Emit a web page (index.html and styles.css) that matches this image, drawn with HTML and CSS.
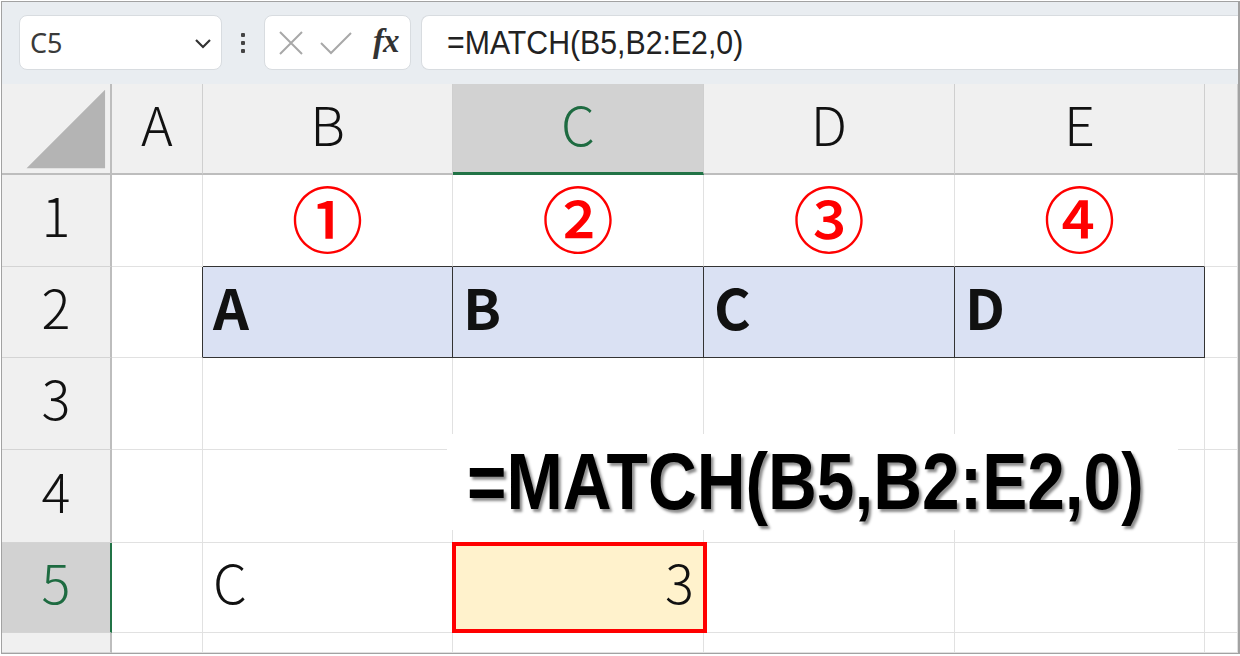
FILE: index.html
```html
<!DOCTYPE html>
<html lang="ja">
<head>
<meta charset="utf-8">
<title>MATCH</title>
<link rel="stylesheet" href="styles.css">
</head>
<body>
<div class="frame">
  <div class="toolbar">
    <div class="namebox">
      <span class="name">C5</span>
      <svg class="chev" width="18" height="12" viewBox="0 0 18 12"><path d="M2 2 L9 9 L16 2" fill="none" stroke="#333" stroke-width="2.2"/></svg>
    </div>
    <div class="dots"><i></i><i></i><i></i></div>
    <div class="fxbox">
      <svg width="28" height="28" viewBox="0 0 28 28"><path d="M3 3 L25 25 M25 3 L3 25" stroke="#a8a8a8" stroke-width="2" fill="none"/></svg>
      <svg width="34" height="28" viewBox="0 0 34 28"><path d="M2 14 L12 24 L32 4" stroke="#a8a8a8" stroke-width="2" fill="none"/></svg>
      <span class="fx">fx</span>
    </div>
    <div class="formula"><span class="ftext">=MATCH(B5,B2:E2,0)</span></div>
  </div>
  <div class="sheet">
    <div class="cell hd corner"><svg width="110" height="91" viewBox="0 0 110 91"><polygon points="25,86 105,6 105,86" fill="#b4b4b4"/></svg></div>
    <div class="cell hd">A</div>
    <div class="cell hd">B</div>
    <div class="cell hd sel">C</div>
    <div class="cell hd">D</div>
    <div class="cell hd">E</div>
    <div class="cell hd"></div>

    <div class="cell rh">1</div>
    <div class="cell"></div>
    <div class="cell circ dk-b">①</div>
    <div class="cell circ dk-b">②</div>
    <div class="cell circ dk-b">③</div>
    <div class="cell circ dk-b">④</div>
    <div class="cell"></div>

    <div class="cell rh">2</div>
    <div class="cell dk-r"></div>
    <div class="cell key">A</div>
    <div class="cell key">B</div>
    <div class="cell key">C</div>
    <div class="cell key">D</div>
    <div class="cell"></div>

    <div class="cell rh">3</div>
    <div class="cell"></div>
    <div class="cell"></div>
    <div class="cell"></div>
    <div class="cell"></div>
    <div class="cell"></div>
    <div class="cell"></div>

    <div class="cell rh">4</div>
    <div class="cell"></div>
    <div class="cell"></div>
    <div class="cell"></div>
    <div class="cell"></div>
    <div class="cell"></div>
    <div class="cell"></div>

    <div class="cell rh rsel">5</div>
    <div class="cell"></div>
    <div class="cell val">C</div>
    <div class="cell val num active">3</div>
    <div class="cell"></div>
    <div class="cell"></div>
    <div class="cell"></div>

    <div class="cell rh"></div>
    <div class="cell"></div>
    <div class="cell"></div>
    <div class="cell"></div>
    <div class="cell"></div>
    <div class="cell"></div>
    <div class="cell"></div>
  </div>
  <div class="overlay"><span class="otext">=MATCH(B5,B2:E2,0)</span></div>
</div>
</body>
</html>
```

FILE: styles.css
```css
html, body {
  margin: 0;
  padding: 0;
  background: #ffffff;
}
.frame {
  position: relative;
  box-sizing: border-box;
  width: 1239px;
  height: 653px;
  margin: 1px 0 0 1px;
  border: 1px solid #a2a2a2;
  border-right: 2px solid #a2a2a2;
  display: flex;
  flex-direction: column;
  overflow: hidden;
  font-family: "Noto Sans CJK JP", "Noto Sans", sans-serif;
}
.toolbar {
  height: 82px;
  flex: none;
  box-sizing: border-box;
  background: #e9edf1;
  padding: 13px 0 0 17px;
  display: flex;
  align-items: flex-start;
}
.namebox {
  box-sizing: border-box;
  width: 203px;
  height: 55px;
  background: #fff;
  border: 1px solid #d8dce0;
  border-radius: 8px;
  display: flex;
  align-items: center;
  padding: 0 9px 0 10px;
  justify-content: space-between;
}
.name {
  font-family: "Noto Sans", sans-serif;
  font-size: 27px;
  color: #3a3a3a;
}
.chev {
  margin-top: 2px;
}
.dots {
  width: 42px;
  height: 55px;
  display: flex;
  flex-direction: column;
  align-items: center;
  justify-content: center;
  gap: 4px;
}
.dots i {
  display: block;
  width: 4px;
  height: 4px;
  background: #444;
  border-radius: 1px;
}
.fxbox {
  box-sizing: border-box;
  width: 147px;
  height: 55px;
  background: #fff;
  border: 1px solid #d8dce0;
  border-radius: 8px;
  display: flex;
  align-items: center;
  padding: 0 8px 0 12px;
  gap: 14px;
}
.fx {
  font-family: "Liberation Serif", serif;
  font-style: italic;
  font-weight: bold;
  font-size: 33px;
  color: #333;
  letter-spacing: -1px;
  margin-left: 6px;
  margin-top: -3px;
}
.formula {
  box-sizing: border-box;
  margin-left: 10px;
  flex: 1;
  height: 55px;
  background: #fff;
  border: 1px solid #d8dce0;
  border-right: none;
  border-radius: 8px 0 0 8px;
  padding-left: 25px;
  display: flex;
  align-items: center;
  font-family: "Liberation Sans", sans-serif;
  font-size: 34px;
  color: #222;
}
.ftext {
  display: inline-block;
  transform: scaleX(0.89);
  transform-origin: left center;
  white-space: nowrap;
}
.sheet {
  flex: 1;
  display: grid;
  grid-template-columns: 110px 91px 250px 251px 251px 250px 1fr;
  grid-template-rows: 91px 92px 91px 92px 93px 90px 1fr;
}
.cell {
  box-sizing: border-box;
  border-right: 1px solid #e1e1e1;
  border-bottom: 1px solid #e1e1e1;
  background: #fff;
  display: flex;
  align-items: center;
  color: #111;
  min-width: 0;
}
.hd {
  background: #f0f0f0;
  border-right-color: #cfcfcf;
  border-bottom: 2px solid #bdbdbd;
  justify-content: center;
  font-size: 54px;
  font-weight: 300;
  padding-bottom: 12px;
}
.corner {
  border-right: 2px solid #bdbdbd;
  padding: 0;
}
.hd.sel {
  background: #d2d2d2;
  color: #1e6b41;
  border-bottom: 3px solid #217346;
}
.rh {
  background: #f0f0f0;
  border-right: 2px solid #bdbdbd;
  border-bottom-color: #d4d4d4;
  justify-content: center;
  font-size: 54px;
  font-weight: 300;
  padding-bottom: 14px;
}
.rh.rsel {
  background: #d2d2d2;
  color: #1e6b41;
  border-right-color: #217346;
}
.circ {
  justify-content: center;
  color: #ff0000;
  font-size: 72px;
  font-weight: 500;
  padding-bottom: 10px;
}
.dk-b {
  border-bottom-color: #333;
}
.dk-r {
  border-right-color: #333;
}
.key {
  background: #dae1f3;
  border-right-color: #333;
  border-bottom-color: #333;
  font-size: 56px;
  font-weight: bold;
  padding-left: 10px;
  padding-bottom: 14px;
}
.val {
  font-size: 54px;
  font-weight: 300;
  padding-left: 10px;
  padding-bottom: 14px;
}
.num {
  justify-content: flex-end;
  padding-left: 0;
  padding-right: 9px;
}
.active {
  position: relative;
  background: #fff2cc;
}
.active::after {
  content: "";
  position: absolute;
  left: -1px;
  top: -1px;
  right: -4px;
  bottom: -1px;
  border: 4px solid #ff0000;
}
.overlay {
  position: absolute;
  left: 445px;
  top: 432px;
  width: 731px;
  height: 96px;
  box-sizing: border-box;
  background: #fff;
  padding-left: 20px;
  font-family: "Liberation Sans", sans-serif;
  font-weight: bold;
  font-size: 80px;
  line-height: 96px;
  color: #000;
  text-shadow: 3px 3px 3px rgba(0, 0, 0, 0.45);
  white-space: nowrap;
}
.otext {
  display: inline-block;
  transform: scaleX(0.845);
  transform-origin: left center;
}
```
